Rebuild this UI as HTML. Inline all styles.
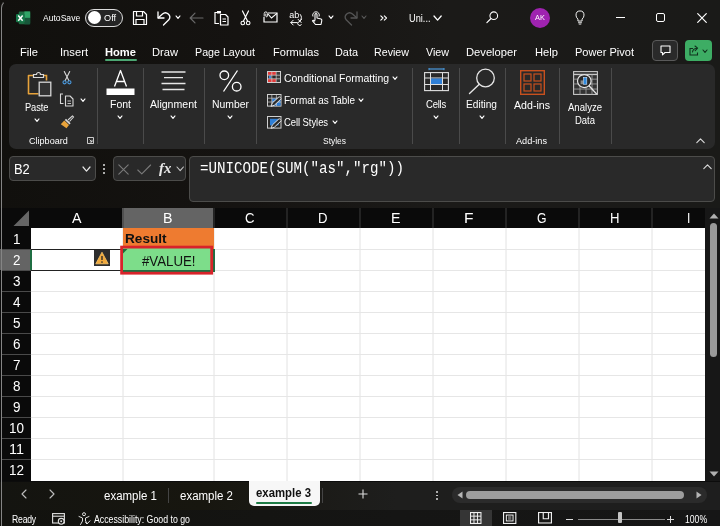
<!DOCTYPE html>
<html lang="en"><head><meta charset="utf-8"><title>Excel - UNICODE example</title>
<style>
html,body{margin:0;padding:0;}
body{width:720px;height:526px;overflow:hidden;background:linear-gradient(90deg,#11100d 0%,#151311 33%,#1b1a18 62%,#1a1a18 100%);position:relative;font-family:'Liberation Sans', sans-serif;}
#app{position:absolute;left:0;top:0;width:720px;height:526px;overflow:hidden;will-change:transform;}
#app div{position:absolute;box-sizing:border-box;}
#app svg{position:absolute;overflow:visible;}
.t{position:absolute;white-space:pre;transform-origin:0 50%;}
</style></head><body><div id="app">
<div style="left:1.4px;top:0;width:30px;height:540px;border-left:1.2px solid #858585;border-top:1.2px solid transparent;border-top-left-radius:8px;z-index:5;pointer-events:none"></div>
<svg style="left:15.9px;top:10.6px" width="14.2" height="13.8" viewBox="0 0 16 16" preserveAspectRatio="none" fill="none"><rect x="3" y="0.5" width="13" height="15" rx="1.5" fill="#1d6b41"/>
<rect x="9.5" y="0.5" width="6.5" height="7.5" fill="#2fa567"/><rect x="9.5" y="8" width="6.5" height="7.5" fill="#17573a"/>
<rect x="0" y="3.5" width="10" height="9.5" rx="1.2" fill="#16794a"/>
<path d="M2.5 5.3 L7.5 11.2 M7.5 5.3 L2.5 11.2" stroke="#fff" stroke-width="1.7"/></svg>
<div style="left:85.3px;top:8.8px;width:37.8px;height:17.8px;border:1px solid #dcdcdc;border-radius:9px;background:#242424"></div>
<div style="left:88.1px;top:11.3px;width:12.6px;height:12.6px;border-radius:7px;background:#fff"></div>
<svg style="left:132px;top:10px" width="16" height="16" viewBox="0 0 16 16" preserveAspectRatio="none" fill="none"><path d="M1.5 1.5 h10 l3 3 v10 h-13 z" stroke="#fff" stroke-width="1.2" stroke-linejoin="round"/>
<path d="M4.5 1.5 v4.5 h6 v-4.5 M4 14.5 v-5 h8 v5" stroke="#fff" stroke-width="1.2"/></svg>
<svg style="left:156px;top:10px" width="16" height="16" viewBox="0 0 16 16" preserveAspectRatio="none" fill="none"><path d="M2 2 v6 h6" stroke="#fff" stroke-width="1.3" stroke-linecap="round" stroke-linejoin="round"/>
<path d="M2.3 7.7 L6.5 4 a4.3 4.3 0 0 1 6.3 5.8 L7.5 15" stroke="#fff" stroke-width="1.3" stroke-linecap="round" stroke-linejoin="round"/></svg>
<svg style="left:175px;top:15.34px" width="6" height="4.32" viewBox="0 0 6 4.32" preserveAspectRatio="none" fill="none"><path d="M1 1 L3 3.32 L5 1" stroke="#fff" stroke-width="1.15" stroke-linecap="round" stroke-linejoin="round"/></svg>
<svg style="left:189px;top:12px" width="15" height="12" viewBox="0 0 15 12" preserveAspectRatio="none" fill="none"><path d="M14 6 H1.5 M6 1.2 L1.2 6 L6 10.8" stroke="#6a6a6a" stroke-width="1.2" stroke-linecap="round" stroke-linejoin="round"/></svg>
<svg style="left:214px;top:10px" width="15" height="16" viewBox="0 0 15 16" preserveAspectRatio="none" fill="none"><path d="M4 2.5 h-3 v11 h4" stroke="#fff" stroke-width="1.2"/><path d="M3 1 h4 v2.5 h-4z" fill="#fff"/>
<path d="M6.5 4.5 h5 l2.5 2.5 v8 h-7.5z" stroke="#fff" stroke-width="1.2" stroke-linejoin="round" fill="#141210"/>
<path d="M8.5 9 h3.5 M8.5 11.5 h3.5" stroke="#fff" stroke-width="1"/></svg>
<svg style="left:240px;top:10px" width="11" height="16" viewBox="0 0 11 16" preserveAspectRatio="none" fill="none"><path d="M2.5 1 L7.5 11 M8.5 1 L3.5 11" stroke="#fff" stroke-width="1.2" stroke-linecap="round"/>
<circle cx="2.8" cy="13" r="1.8" stroke="#fff" stroke-width="1.1"/><circle cx="8.2" cy="13" r="1.8" stroke="#fff" stroke-width="1.1"/></svg>
<svg style="left:263px;top:11px" width="15" height="12" viewBox="0 0 15 12" preserveAspectRatio="none" fill="none"><path d="M5 2 H14 V11 H1 V6" stroke="#fff" stroke-width="1.2"/><path d="M5 3 L8.5 7 L14 2.3" stroke="#fff" stroke-width="1.1"/>
<path d="M1.2 5.5 V2.5 a1.6 1.6 0 0 1 3.2 0 V5 a0.8 0.8 0 0 1 -1.6 0 V2.6" stroke="#fff" stroke-width="0.9"/></svg>
<svg style="left:289px;top:11px" width="14" height="15" viewBox="0 0 14 15" preserveAspectRatio="none" fill="none"><text x="0.2" y="7" font-family="Liberation Sans, sans-serif" font-size="9" fill="#fff" textLength="10" lengthAdjust="spacingAndGlyphs">ab</text>
<path d="M11.3 3.5 q2.6 3.2 -0.3 6.4 M12.6 8.2 l-1.8 1.9 l-1.6 -1.7" stroke="#fff" stroke-width="1" stroke-linecap="round" fill="none"/>
<path d="M2 11.6 h6.2 M4.2 9.2 l-2.4 2.4 l2.4 2.4" stroke="#fff" stroke-width="1" stroke-linecap="round" stroke-linejoin="round"/>
<path d="M12.3 11.2 a2 2 0 1 0 0 2.6" stroke="#fff" stroke-width="1" stroke-linecap="round"/></svg>
<svg style="left:311px;top:10px" width="12" height="16" viewBox="0 0 12 16" preserveAspectRatio="none" fill="none"><path d="M2 6.5 a3.3 3.3 0 1 1 6 0" stroke="#fff" stroke-width="1"/>
<path d="M4 10.5 V4.5 a1 1 0 0 1 2 0 V8 l4 1 q1 .4 .8 1.6 L10 14.5 H4.5 L1.5 10.8 q.8 -1.2 2.5 .6" stroke="#fff" stroke-width="1.1" stroke-linejoin="round"/></svg>
<svg style="left:328.3px;top:15.44px" width="6" height="4.32" viewBox="0 0 6 4.32" preserveAspectRatio="none" fill="none"><path d="M1 1 L3 3.32 L5 1" stroke="#fff" stroke-width="1.15" stroke-linecap="round" stroke-linejoin="round"/></svg>
<svg style="left:343px;top:10px" width="16" height="16" viewBox="0 0 16 16" preserveAspectRatio="none" fill="none"><path d="M14 2 v6 h-6" stroke="#555" stroke-width="1.3" stroke-linecap="round" stroke-linejoin="round"/>
<path d="M13.7 7.7 L9.5 4 a4.3 4.3 0 0 0 -6.3 5.8 L8.5 15" stroke="#555" stroke-width="1.3" stroke-linecap="round" stroke-linejoin="round"/></svg>
<svg style="left:361.4px;top:15.44px" width="6" height="4.32" viewBox="0 0 6 4.32" preserveAspectRatio="none" fill="none"><path d="M1 1 L3 3.32 L5 1" stroke="#5a5a5a" stroke-width="1.1" stroke-linecap="round" stroke-linejoin="round"/></svg>
<svg style="left:380px;top:15px" width="8" height="6" viewBox="0 0 8 6" preserveAspectRatio="none" fill="none"><path d="M0.8 0.8 L3 3 L0.8 5.2 M4.3 0.8 L6.5 3 L4.3 5.2" stroke="#fff" stroke-width="1.1" stroke-linecap="round" stroke-linejoin="round"/></svg>
<svg style="left:433.4px;top:14.91px" width="9.2" height="6.18" viewBox="0 0 9.2 6.18" preserveAspectRatio="none" fill="none"><path d="M1 1 L4.6 5.18 L8.2 1" stroke="#fff" stroke-width="1.3" stroke-linecap="round" stroke-linejoin="round"/></svg>
<svg style="left:485.5px;top:11px" width="12.5" height="12.5" viewBox="0 0 14 14" preserveAspectRatio="none" fill="none"><circle cx="8.7" cy="5.3" r="4.3" stroke="#fff" stroke-width="1.2"/><path d="M5.6 8.4 L1 13" stroke="#fff" stroke-width="1.3" stroke-linecap="round"/></svg>
<div style="left:529.7px;top:7.6px;width:20.2px;height:20.2px;border-radius:10.1px;background:#9f23b0"></div>
<svg style="left:574.8px;top:10.3px" width="10" height="14.8" viewBox="0 0 12 17" preserveAspectRatio="none" fill="none"><path d="M3.5 10.5 q-2.3 -2 -2.3 -4.6 a4.8 4.8 0 0 1 9.6 0 q0 2.6 -2.3 4.6 v2.2 h-5z" stroke="#fff" stroke-width="1.1" stroke-linejoin="round"/>
<path d="M3.7 14.6 h4.6 M4.5 16.2 h3" stroke="#fff" stroke-width="1"/></svg>
<div style="left:616px;top:17px;width:9px;height:1.3px;background:#fff;"></div>
<div style="left:656px;top:13px;width:9px;height:9px;border:1.3px solid #fff;border-radius:2px"></div>
<svg style="left:697px;top:13px" width="10" height="10" viewBox="0 0 10 10" preserveAspectRatio="none" fill="none"><path d="M0.7 0.7 L9.3 9.3 M9.3 0.7 L0.7 9.3" stroke="#fff" stroke-width="1.2" stroke-linecap="round"/></svg>
<div style="left:105px;top:59px;width:32px;height:2px;background:#4ca773;border-radius:1px"></div>
<div style="left:652px;top:40px;width:26px;height:21px;border:1px solid #5a5a5a;border-radius:4px;background:#2a2a2a"></div>
<svg style="left:660px;top:45px" width="11" height="11" viewBox="0 0 11 11" preserveAspectRatio="none" fill="none"><path d="M1 1 h9 v6.5 h-5 l-2.5 2.3 v-2.3 h-1.5z" stroke="#fff" stroke-width="1.1" stroke-linejoin="round"/></svg>
<div style="left:685px;top:40px;width:27px;height:21px;border-radius:4px;background:#3dad64"></div>
<svg style="left:689px;top:45px" width="10" height="11" viewBox="0 0 10 11" preserveAspectRatio="none" fill="none"><path d="M4 3.5 h-3 v6.5 h7.5 v-2.5" stroke="#10311d" stroke-width="1.1"/><path d="M3.5 7 q.5 -3.5 4.2 -3.8 M6 1 l2.6 2.2 l-2.4 2.4" stroke="#10311d" stroke-width="1.1" stroke-linecap="round" stroke-linejoin="round"/></svg>
<svg style="left:702px;top:48.84px" width="6" height="4.32" viewBox="0 0 6 4.32" preserveAspectRatio="none" fill="none"><path d="M1 1 L3 3.32 L5 1" stroke="#10311d" stroke-width="1.1" stroke-linecap="round" stroke-linejoin="round"/></svg>
<div style="left:9px;top:64px;width:706.3px;height:84.7px;background:#292929;border-radius:7px"></div>
<div style="left:97px;top:68px;width:1px;height:76px;background:#4a4a4a;"></div>
<div style="left:143px;top:68px;width:1px;height:76px;background:#4a4a4a;"></div>
<div style="left:204px;top:68px;width:1px;height:76px;background:#4a4a4a;"></div>
<div style="left:256px;top:68px;width:1px;height:76px;background:#4a4a4a;"></div>
<div style="left:412px;top:68px;width:1px;height:76px;background:#4a4a4a;"></div>
<div style="left:459px;top:68px;width:1px;height:76px;background:#4a4a4a;"></div>
<div style="left:505px;top:68px;width:1px;height:76px;background:#4a4a4a;"></div>
<div style="left:559px;top:68px;width:1px;height:76px;background:#4a4a4a;"></div>
<div style="left:611px;top:68px;width:1px;height:76px;background:#4a4a4a;"></div>
<svg style="left:27px;top:71px" width="26" height="29" viewBox="0 0 26 29" preserveAspectRatio="none" fill="none"><path d="M9 4.5 h-7.5 v18.3 h10" stroke="#e8a33b" stroke-width="1.6" stroke-linejoin="round"/><path d="M17 4.5 h2.5 v5" stroke="#e8a33b" stroke-width="1.6"/>
<path d="M6.5 6.5 v-3 h3 a2 2 0 0 1 4 0 h3 v3z" stroke="#d8d8d8" stroke-width="1.2" fill="#292929"/>
<rect x="12.2" y="11.2" width="11.6" height="13.6" stroke="#d8d8d8" stroke-width="1.3" fill="#333"/></svg>
<svg style="left:33.5px;top:117.84px" width="6" height="4.32" viewBox="0 0 6 4.32" preserveAspectRatio="none" fill="none"><path d="M1 1 L3 3.32 L5 1" stroke="#fff" stroke-width="1.15" stroke-linecap="round" stroke-linejoin="round"/></svg>
<svg style="left:62px;top:71px" width="10" height="14" viewBox="0 0 10 14" preserveAspectRatio="none" fill="none"><path d="M2.3 0.5 L6.8 9.5 M7.7 0.5 L3.2 9.5" stroke="#d8d8d8" stroke-width="1.1" stroke-linecap="round"/>
<circle cx="2.6" cy="11.3" r="1.6" stroke="#4a9be0" stroke-width="1.1"/><circle cx="7.4" cy="11.3" r="1.6" stroke="#4a9be0" stroke-width="1.1"/></svg>
<svg style="left:59px;top:92.3px" width="15" height="15" viewBox="0 0 15 15" preserveAspectRatio="none" fill="none"><path d="M4 2 h-2.5 v9.5 h3" stroke="#d8d8d8" stroke-width="1.1"/>
<path d="M6.5 4 h4.5 l3 3 v7 h-7.5z" stroke="#d8d8d8" stroke-width="1.1" stroke-linejoin="round" fill="#292929"/><path d="M8.5 9 h3.5 M8.5 11.5 h3.5" stroke="#d8d8d8" stroke-width="0.9"/></svg>
<svg style="left:79.8px;top:98.04px" width="6" height="4.32" viewBox="0 0 6 4.32" preserveAspectRatio="none" fill="none"><path d="M1 1 L3 3.32 L5 1" stroke="#fff" stroke-width="1.15" stroke-linecap="round" stroke-linejoin="round"/></svg>
<svg style="left:60px;top:115px" width="14" height="14" viewBox="0 0 14 14" preserveAspectRatio="none" fill="none"><path d="M8 5 L12.5 0.8 L13.6 2 L9.5 6.5" stroke="#d8d8d8" stroke-width="1.1" stroke-linejoin="round"/>
<path d="M6 3.8 L10.6 8.2 L9.5 9.5 L4.8 5z" fill="#d8d8d8"/>
<path d="M4.3 5.6 L9 10 L6.5 13.3 L0.8 9.2z" fill="#e8a33b"/></svg>
<svg style="left:87px;top:137px" width="7" height="7" viewBox="0 0 7 7" preserveAspectRatio="none" fill="none"><path d="M0.5 0.5 h6 v6 h-6z" stroke="#ddd" stroke-width="0.9"/><path d="M2.5 2.5 L5 5 M5 2.8 V5 H2.8" stroke="#ddd" stroke-width="0.9"/></svg>
<svg style="left:106px;top:69px" width="29" height="28" viewBox="0 0 29 28" preserveAspectRatio="none" fill="none"><path d="M8.5 17.5 L14.5 1.5 L20.5 17.5 M10.5 12.5 h8" stroke="#fff" stroke-width="1.3" stroke-linejoin="round"/>
<rect x="0.5" y="19.5" width="28" height="6.5" fill="#fff"/></svg>
<svg style="left:117px;top:114.84px" width="6" height="4.32" viewBox="0 0 6 4.32" preserveAspectRatio="none" fill="none"><path d="M1 1 L3 3.32 L5 1" stroke="#fff" stroke-width="1.15" stroke-linecap="round" stroke-linejoin="round"/></svg>
<svg style="left:161px;top:71px" width="25" height="20" viewBox="0 0 25 20" preserveAspectRatio="none" fill="none"><path d="M0.5 1 h24 M3 6.7 h19 M0.5 12.5 h24 M1.5 18.5 h22" stroke="#e6e6e6" stroke-width="1.3"/></svg>
<svg style="left:170px;top:114.84px" width="6" height="4.32" viewBox="0 0 6 4.32" preserveAspectRatio="none" fill="none"><path d="M1 1 L3 3.32 L5 1" stroke="#fff" stroke-width="1.15" stroke-linecap="round" stroke-linejoin="round"/></svg>
<svg style="left:219px;top:70px" width="23" height="22" viewBox="0 0 23 22" preserveAspectRatio="none" fill="none"><circle cx="5.3" cy="5.3" r="4.3" stroke="#fff" stroke-width="1.3"/><circle cx="17.7" cy="16.7" r="4.3" stroke="#fff" stroke-width="1.3"/>
<path d="M18.5 0.5 L4.5 21.5" stroke="#fff" stroke-width="1.3"/></svg>
<svg style="left:227px;top:114.84px" width="6" height="4.32" viewBox="0 0 6 4.32" preserveAspectRatio="none" fill="none"><path d="M1 1 L3 3.32 L5 1" stroke="#fff" stroke-width="1.15" stroke-linecap="round" stroke-linejoin="round"/></svg>
<svg style="left:267px;top:71.3px" width="14" height="12" viewBox="0 0 14 12" preserveAspectRatio="none" fill="none"><rect x="0.5" y="0.5" width="13" height="11" stroke="#cfcfcf" stroke-width="1" fill="#3a3a3a"/>
<rect x="1" y="1" width="8" height="3.2" fill="#e23b3b"/><rect x="1" y="7.8" width="8" height="3.2" fill="#e23b3b"/>
<rect x="2" y="4.6" width="2" height="2.8" fill="#3f86e0"/><rect x="5" y="4.4" width="4" height="3.2" fill="#2b2b2b"/>
<path d="M4.8 0.5 v11 M9.2 0.5 v11 M0.5 4.2 h13 M0.5 7.8 h13" stroke="#cfcfcf" stroke-width="0.7"/></svg>
<svg style="left:392px;top:75.84px" width="6" height="4.32" viewBox="0 0 6 4.32" preserveAspectRatio="none" fill="none"><path d="M1 1 L3 3.32 L5 1" stroke="#fff" stroke-width="1.15" stroke-linecap="round" stroke-linejoin="round"/></svg>
<svg style="left:267px;top:94px" width="15" height="13" viewBox="0 0 15 13" preserveAspectRatio="none" fill="none"><rect x="0.5" y="0.5" width="13.5" height="11.6" stroke="#cfcfcf" stroke-width="1"/>
<rect x="5" y="4.4" width="8.6" height="7.3" fill="#2f7fd6"/>
<path d="M4.8 0.5 v11.6 M9.4 0.5 v11.6 M0.5 4.2 h13.5 M0.5 8 h13.5" stroke="#cfcfcf" stroke-width="0.7"/>
<path d="M4 12.3 L5.3 9 L12.2 2.6 L14.3 4.7 L7.4 11.2z" fill="#2b2b2b" stroke="#efefef" stroke-width="0.9" stroke-linejoin="round"/></svg>
<svg style="left:357.8px;top:97.84px" width="6" height="4.32" viewBox="0 0 6 4.32" preserveAspectRatio="none" fill="none"><path d="M1 1 L3 3.32 L5 1" stroke="#fff" stroke-width="1.15" stroke-linecap="round" stroke-linejoin="round"/></svg>
<svg style="left:267px;top:116px" width="15" height="13" viewBox="0 0 15 13" preserveAspectRatio="none" fill="none"><rect x="0.5" y="0.5" width="13.5" height="11.6" stroke="#cfcfcf" stroke-width="1"/>
<rect x="3" y="2.8" width="8.6" height="6.6" fill="#2f7fd6"/>
<path d="M4 12.3 L5.3 9 L12.2 2.6 L14.3 4.7 L7.4 11.2z" fill="#2b2b2b" stroke="#efefef" stroke-width="0.9" stroke-linejoin="round"/></svg>
<svg style="left:331.5px;top:119.84px" width="6" height="4.32" viewBox="0 0 6 4.32" preserveAspectRatio="none" fill="none"><path d="M1 1 L3 3.32 L5 1" stroke="#fff" stroke-width="1.15" stroke-linecap="round" stroke-linejoin="round"/></svg>
<svg style="left:424px;top:68px" width="25" height="24" viewBox="0 0 25 24" preserveAspectRatio="none" fill="none"><path d="M5 1 h15" stroke="#4a9be0" stroke-width="1.2"/><path d="M5 0 v2.2 M20 0 v2.2" stroke="#4a9be0" stroke-width="1"/>
<rect x="0.6" y="4.6" width="23.8" height="18" stroke="#e0e0e0" stroke-width="1.1"/>
<path d="M0.6 10 h23.8 M0.6 16.5 h23.8 M6.5 4.6 v18 M18.5 4.6 v18" stroke="#e0e0e0" stroke-width="1"/>
<rect x="7" y="10.5" width="11" height="5.5" fill="#2f7fd6"/></svg>
<svg style="left:432.5px;top:114.84px" width="6" height="4.32" viewBox="0 0 6 4.32" preserveAspectRatio="none" fill="none"><path d="M1 1 L3 3.32 L5 1" stroke="#fff" stroke-width="1.15" stroke-linecap="round" stroke-linejoin="round"/></svg>
<svg style="left:468px;top:68px" width="28" height="27" viewBox="0 0 28 27" preserveAspectRatio="none" fill="none"><circle cx="17.5" cy="10" r="8.8" stroke="#e6e6e6" stroke-width="1.3"/><path d="M11.3 16.3 L1.5 25.5" stroke="#e6e6e6" stroke-width="1.4" stroke-linecap="round"/></svg>
<svg style="left:478.5px;top:114.84px" width="6" height="4.32" viewBox="0 0 6 4.32" preserveAspectRatio="none" fill="none"><path d="M1 1 L3 3.32 L5 1" stroke="#fff" stroke-width="1.15" stroke-linecap="round" stroke-linejoin="round"/></svg>
<svg style="left:520px;top:70px" width="25" height="25" viewBox="0 0 25 25" preserveAspectRatio="none" fill="none"><rect x="0.7" y="0.7" width="23.6" height="23.6" stroke="#c8501e" stroke-width="1.4"/>
<rect x="4" y="4" width="7" height="7" stroke="#c8501e" stroke-width="1.2"/><rect x="14" y="4" width="7" height="7" stroke="#c8501e" stroke-width="1.2"/>
<rect x="4" y="14" width="7" height="7" stroke="#c8501e" stroke-width="1.2"/><rect x="14" y="14" width="7" height="7" stroke="#c8501e" stroke-width="1.2"/></svg>
<svg style="left:573px;top:71px" width="25" height="24" viewBox="0 0 25 25" preserveAspectRatio="none" fill="none"><rect x="0.6" y="0.6" width="23.8" height="23.8" stroke="#c8c8c8" stroke-width="1.1" fill="#333"/>
<path d="M0.6 3.6 h23.8" stroke="#c8c8c8" stroke-width="1.4"/>
<path d="M0.6 8.5 h23.8 M0.6 13.5 h23.8 M0.6 18.8 h23.8 M7 3.6 v21 M13 3.6 v21 M19 3.6 v21" stroke="#a8a8a8" stroke-width="0.8"/>
<circle cx="11.3" cy="10.5" r="6.8" fill="#292929" stroke="#e6e6e6" stroke-width="1.2"/>
<path d="M16.2 15.6 L23.3 23.6" stroke="#e6e6e6" stroke-width="1.4" stroke-linecap="round"/>
<rect x="7.6" y="9.8" width="2.6" height="4" fill="#8a8a8a"/><rect x="10.6" y="6.6" width="3.2" height="7.2" fill="#2f8be0" stroke="#cfe6ff" stroke-width="0.6"/></svg>
<svg style="left:696.3px;top:138px" width="9" height="5.5" viewBox="0 0 9 5.5" preserveAspectRatio="none" fill="none"><path d="M0.8 4.7 L4.5 0.9 L8.2 4.7" stroke="#dcdcdc" stroke-width="1.1" stroke-linecap="round" stroke-linejoin="round"/></svg>
<div style="left:9px;top:156px;width:87px;height:25px;background:#292929;border:1px solid #4c4c4a;border-radius:4px"></div>
<svg style="left:82.0px;top:166.27px" width="9.0" height="6.06" viewBox="0 0 9.0 6.06" preserveAspectRatio="none" fill="none"><path d="M1 1 L4.5 5.06 L8.0 1" stroke="#e6e6e6" stroke-width="1.2" stroke-linecap="round" stroke-linejoin="round"/></svg>
<div style="left:103.2px;top:163.5px;width:2px;height:2px;background:#e0e0e0;border-radius:1px"></div>
<div style="left:103.2px;top:167.5px;width:2px;height:2px;background:#e0e0e0;border-radius:1px"></div>
<div style="left:103.2px;top:171.5px;width:2px;height:2px;background:#e0e0e0;border-radius:1px"></div>
<div style="left:113px;top:156px;width:73px;height:25px;background:#292929;border:1px solid #4c4c4a;border-radius:4px"></div>
<svg style="left:118px;top:164px" width="11" height="11" viewBox="0 0 11 11" preserveAspectRatio="none" fill="none"><path d="M0.8 0.8 L10.2 10.2 M10.2 0.8 L0.8 10.2" stroke="#7a7a7a" stroke-width="1.1" stroke-linecap="round"/></svg>
<svg style="left:137px;top:164px" width="14.5" height="11" viewBox="0 0 14.5 11" preserveAspectRatio="none" fill="none"><path d="M0.8 6 L4.8 9.8 L13.6 1" stroke="#7a7a7a" stroke-width="1.1" stroke-linecap="round" stroke-linejoin="round"/></svg>
<svg style="left:175.8px;top:165.94px" width="8.4" height="5.71" viewBox="0 0 8.4 5.71" preserveAspectRatio="none" fill="none"><path d="M1 1 L4.2 4.71 L7.4 1" stroke="#c8c8c8" stroke-width="1.1" stroke-linecap="round" stroke-linejoin="round"/></svg>
<div style="left:189px;top:156px;width:526px;height:46px;background:#292929;border:1px solid #4c4c4a;border-radius:4px"></div>
<svg style="left:702.8px;top:164.3px" width="9" height="5.5" viewBox="0 0 9 5.5" preserveAspectRatio="none" fill="none"><path d="M0.8 4.7 L4.5 0.9 L8.2 4.7" stroke="#dcdcdc" stroke-width="1.1" stroke-linecap="round" stroke-linejoin="round"/></svg>
<div style="left:0px;top:208px;width:705px;height:20px;background:#0a0a0a;"></div>
<div style="left:0px;top:228px;width:31px;height:253px;background:#0a0a0a;"></div>
<div style="left:31px;top:228px;width:674px;height:253px;background:#fff;"></div>
<svg style="left:13px;top:210px" width="16" height="16" viewBox="0 0 16 16" preserveAspectRatio="none" fill="none"><path d="M16 0.5 V16 H0.5z" fill="#666"/></svg>
<div style="left:122px;top:208px;width:91px;height:20px;background:#646464;"></div>
<svg style="left:0px;top:208px" width="705" height="20" viewBox="0 0 705 20" preserveAspectRatio="none" fill="none"><path d="M123 0 V20 M214 0 V20 M287 0 V20 M360 0 V20 M433 0 V20 M506 0 V20 M579 0 V20 M652 0 V20 " stroke="#3c3c3c" stroke-width="1"/></svg>
<div style="left:0px;top:249px;width:31px;height:21px;background:#646464;"></div>
<div style="left:30px;top:249px;width:1.5px;height:21px;background:#1f6e43;"></div>
<div style="left:2px;top:249px;width:29px;height:1px;background:#4a4a4a;"></div>
<div style="left:2px;top:270px;width:29px;height:1px;background:#4a4a4a;"></div>
<div style="left:2px;top:291px;width:29px;height:1px;background:#4a4a4a;"></div>
<div style="left:2px;top:312px;width:29px;height:1px;background:#4a4a4a;"></div>
<div style="left:2px;top:333px;width:29px;height:1px;background:#4a4a4a;"></div>
<div style="left:2px;top:354px;width:29px;height:1px;background:#4a4a4a;"></div>
<div style="left:2px;top:375px;width:29px;height:1px;background:#4a4a4a;"></div>
<div style="left:2px;top:396px;width:29px;height:1px;background:#4a4a4a;"></div>
<div style="left:2px;top:417px;width:29px;height:1px;background:#4a4a4a;"></div>
<div style="left:2px;top:438px;width:29px;height:1px;background:#4a4a4a;"></div>
<div style="left:2px;top:459px;width:29px;height:1px;background:#4a4a4a;"></div>
<svg style="left:31px;top:228px" width="674" height="253" viewBox="0 0 674 253" preserveAspectRatio="none" fill="none"><path d="M92 0 V253 M183 0 V253 M256 0 V253 M329 0 V253 M402 0 V253 M475 0 V253 M548 0 V253 M621 0 V253 " stroke="#e2e2e2" stroke-width="1"/></svg>
<div style="left:31px;top:249px;width:674px;height:1px;background:#e6e6e6;"></div>
<div style="left:31px;top:270px;width:674px;height:1px;background:#e6e6e6;"></div>
<div style="left:31px;top:291px;width:674px;height:1px;background:#e6e6e6;"></div>
<div style="left:31px;top:312px;width:674px;height:1px;background:#e6e6e6;"></div>
<div style="left:31px;top:333px;width:674px;height:1px;background:#e6e6e6;"></div>
<div style="left:31px;top:354px;width:674px;height:1px;background:#e6e6e6;"></div>
<div style="left:31px;top:375px;width:674px;height:1px;background:#e6e6e6;"></div>
<div style="left:31px;top:396px;width:674px;height:1px;background:#e6e6e6;"></div>
<div style="left:31px;top:417px;width:674px;height:1px;background:#e6e6e6;"></div>
<div style="left:31px;top:438px;width:674px;height:1px;background:#e6e6e6;"></div>
<div style="left:31px;top:459px;width:674px;height:1px;background:#e6e6e6;"></div>
<div style="left:31px;top:249px;width:92px;height:1px;background:#222;"></div>
<div style="left:31px;top:270px;width:92px;height:1px;background:#222;"></div>
<div style="left:123px;top:228px;width:91px;height:21px;background:#ee7b30;"></div>
<div style="left:123px;top:248px;width:90px;height:22.2px;background:#7ddd8a;"></div>
<div style="left:123px;top:270.2px;width:90px;height:1.4px;background:#1f6e43;"></div>
<div style="left:213.4px;top:249px;width:1.3px;height:22px;background:#1f6e43;"></div>
<div style="left:212.6px;top:269.2px;width:2.6px;height:2.6px;background:#1f6e43;"></div>
<svg style="left:120px;top:245px" width="95" height="31" viewBox="0 0 95 31" preserveAspectRatio="none" fill="none"><rect x="1.6" y="2.1" width="90.1" height="26.1" stroke="#d8232a" stroke-width="2.8"/></svg>
<svg style="left:123.2px;top:248.7px" width="5" height="5" viewBox="0 0 5 5" preserveAspectRatio="none" fill="none"><path d="M0 0 H4.5 L0 4.5z" fill="#1d6b3a"/></svg>
<div style="left:94px;top:250px;width:16px;height:16px;background:#2e2e2e;"></div>
<svg style="left:95px;top:251px" width="14" height="14" viewBox="0 0 14 14" preserveAspectRatio="none" fill="none"><path d="M7 1.2 L13.2 12.8 H0.8z" fill="#f2a93b" stroke="#f6c46a" stroke-width="0.8" stroke-linejoin="round"/><path d="M7 5 v4" stroke="#2b2b2b" stroke-width="1.4"/><circle cx="7" cy="11" r="0.85" fill="#2b2b2b"/></svg>
<div style="left:705px;top:208px;width:15px;height:273px;background:#171717;"></div>
<svg style="left:709px;top:213px" width="10" height="6" viewBox="0 0 10 6" preserveAspectRatio="none" fill="none"><path d="M5 0.5 L9.5 5.5 H0.5z" fill="#b0b0b0"/></svg>
<div style="left:710.3px;top:222.5px;width:6.7px;height:134.5px;background:#9a9a9a;border-radius:3.5px"></div>
<svg style="left:709px;top:471px" width="10" height="6" viewBox="0 0 10 6" preserveAspectRatio="none" fill="none"><path d="M5 5.5 L9.5 0.5 H0.5z" fill="#b0b0b0"/></svg>
<div style="left:0px;top:481px;width:720px;height:29px;background:linear-gradient(90deg,#141410 0%,#17160f 28%,#1e1e1d 55%,#1e1e1e 100%);"></div>
<div style="left:0px;top:481px;width:720px;height:1px;background:#0c0c0c;"></div>
<svg style="left:21px;top:489px" width="6" height="10" viewBox="0 0 6 10" preserveAspectRatio="none" fill="none"><path d="M5 1 L1 5 L5 9" stroke="#bdbdbd" stroke-width="1.1" stroke-linecap="round" stroke-linejoin="round"/></svg>
<svg style="left:49px;top:489px" width="6" height="10" viewBox="0 0 6 10" preserveAspectRatio="none" fill="none"><path d="M1 1 L5 5 L1 9" stroke="#bdbdbd" stroke-width="1.1" stroke-linecap="round" stroke-linejoin="round"/></svg>
<div style="left:168px;top:488px;width:1px;height:15px;background:#444;"></div>
<div style="left:248.7px;top:481px;width:71.2px;height:24.5px;background:#f7f7f7;border-radius:0 0 5px 5px"></div>
<div style="left:256px;top:502px;width:56px;height:2px;background:#1e7c45;border-radius:1px"></div>
<div style="left:322px;top:488px;width:1px;height:15px;background:#444;"></div>
<svg style="left:358px;top:489px" width="10" height="10" viewBox="0 0 10 10" preserveAspectRatio="none" fill="none"><path d="M5 0.5 V9.5 M0.5 5 H9.5" stroke="#ddd" stroke-width="1.1"/></svg>
<div style="left:436px;top:491px;width:1.8px;height:1.8px;background:#ddd;border-radius:1px"></div>
<div style="left:436px;top:494.5px;width:1.8px;height:1.8px;background:#ddd;border-radius:1px"></div>
<div style="left:436px;top:498px;width:1.8px;height:1.8px;background:#ddd;border-radius:1px"></div>
<div style="left:451.5px;top:486.5px;width:255px;height:16.5px;background:#2b2b2b;border-radius:8.5px"></div>
<svg style="left:457px;top:491px" width="6" height="8" viewBox="0 0 6 8" preserveAspectRatio="none" fill="none"><path d="M0.5 4 L5.5 0.5 V7.5z" fill="#b5b5b5"/></svg>
<svg style="left:696px;top:491px" width="6" height="8" viewBox="0 0 6 8" preserveAspectRatio="none" fill="none"><path d="M5.5 4 L0.5 0.5 V7.5z" fill="#b5b5b5"/></svg>
<div style="left:466px;top:491px;width:218px;height:7.5px;background:#9e9e9e;border-radius:4px"></div>
<div style="left:0px;top:510px;width:720px;height:16px;background:linear-gradient(90deg,#12120e 0%,#151514 55%,#161616 100%);"></div>
<svg style="left:52px;top:513px" width="13" height="12" viewBox="0 0 13 12" preserveAspectRatio="none" fill="none"><rect x="0.6" y="0.6" width="11.8" height="9.4" stroke="#e0e0e0" stroke-width="1.1"/><path d="M0.6 3.2 h11.8" stroke="#e0e0e0" stroke-width="1.1"/><circle cx="9.2" cy="8.3" r="2.9" fill="#12120e" stroke="#e0e0e0" stroke-width="1.1"/><circle cx="9.2" cy="8.3" r="1" fill="#e0e0e0"/></svg>
<svg style="left:78px;top:512px" width="13" height="13" viewBox="0 0 13 13" preserveAspectRatio="none" fill="none"><circle cx="6" cy="2.2" r="1.5" stroke="#ddd" stroke-width="1"/><path d="M1 4.5 L4.5 6 V9 L2.5 12.5 M11 4.5 L7.5 6 V9 L9 11" stroke="#ddd" stroke-width="1" stroke-linecap="round" stroke-linejoin="round"/><path d="M7.5 10.5 l1.5 1.5 l3 -3.2" stroke="#ddd" stroke-width="1" stroke-linecap="round"/></svg>
<div style="left:460px;top:510px;width:32px;height:16px;background:#353535;"></div>
<svg style="left:469.5px;top:512px" width="11.5" height="12" viewBox="0 0 11 11" preserveAspectRatio="none" fill="none"><rect x="0.5" y="0.5" width="10" height="10" stroke="#eee" stroke-width="1"/><path d="M3.8 0.5 v10 M7.2 0.5 v10 M0.5 3.8 h10 M0.5 7.2 h10" stroke="#eee" stroke-width="0.9"/></svg>
<svg style="left:503.3px;top:512px" width="13.4" height="12" viewBox="0 0 12 11" preserveAspectRatio="none" fill="none"><rect x="0.5" y="0.5" width="11" height="10" stroke="#eee" stroke-width="1"/><rect x="3" y="2.8" width="6" height="5.4" stroke="#eee" stroke-width="0.9"/><path d="M4.5 4.6 h3 M4.5 6.4 h3" stroke="#eee" stroke-width="0.7"/></svg>
<svg style="left:537.5px;top:512px" width="14" height="11.5" viewBox="0 0 12 11" preserveAspectRatio="none" fill="none"><rect x="0.5" y="0.5" width="11" height="10" stroke="#eee" stroke-width="1"/><path d="M4.5 0.5 v6 h4.5 v-6" stroke="#eee" stroke-width="1"/></svg>
<div style="left:566px;top:518.5px;width:7px;height:1px;background:#ddd;"></div>
<div style="left:578px;top:518.5px;width:87px;height:1px;background:#8a8a8a;"></div>
<div style="left:617.7px;top:512px;width:4.6px;height:11px;background:#c4c4c4;border-radius:1px"></div>
<svg style="left:666.7px;top:515.5px" width="7" height="7" viewBox="0 0 7 7" preserveAspectRatio="none" fill="none"><path d="M3.5 0 V7 M0 3.5 H7" stroke="#ddd" stroke-width="1"/></svg>
<span class="t" style="left:43.1px;top:12.1px;line-height:12px;font-size:9.5px;color:#fff;transform:scaleX(0.9028);">AutoSave</span>
<span class="t" style="left:104.4px;top:12.0px;line-height:12px;font-size:9.5px;color:#fff;transform:scaleX(0.9680);">Off</span>
<span class="t" style="left:408.5px;top:11.5px;line-height:13px;font-size:10px;color:#fff;transform:scaleX(0.9210);">Uni...</span>
<span class="t" style="left:535px;top:12.8px;line-height:10px;font-size:8px;color:#fff;transform:scaleX(0.9183);">AK</span>
<span class="t" style="left:20px;top:45.0px;line-height:14px;font-size:11px;color:#fff;transform:scaleX(1.0150);">File</span>
<span class="t" style="left:60px;top:45.0px;line-height:14px;font-size:11px;color:#fff;transform:scaleX(1.0176);">Insert</span>
<span class="t" style="left:105px;top:45.0px;line-height:14px;font-size:11px;color:#fff;transform:scaleX(1.0143);font-weight:700;">Home</span>
<span class="t" style="left:152px;top:45.0px;line-height:14px;font-size:11px;color:#fff;transform:scaleX(1.0128);">Draw</span>
<span class="t" style="left:195px;top:45.0px;line-height:14px;font-size:11px;color:#fff;transform:scaleX(0.9712);">Page Layout</span>
<span class="t" style="left:273px;top:45.0px;line-height:14px;font-size:11px;color:#fff;transform:scaleX(1.0034);">Formulas</span>
<span class="t" style="left:335px;top:45.0px;line-height:14px;font-size:11px;color:#fff;transform:scaleX(0.9892);">Data</span>
<span class="t" style="left:374px;top:45.0px;line-height:14px;font-size:11px;color:#fff;transform:scaleX(0.9701);">Review</span>
<span class="t" style="left:426px;top:45.0px;line-height:14px;font-size:11px;color:#fff;transform:scaleX(0.9723);">View</span>
<span class="t" style="left:466px;top:45.0px;line-height:14px;font-size:11px;color:#fff;transform:scaleX(1.0171);">Developer</span>
<span class="t" style="left:535px;top:45.0px;line-height:14px;font-size:11px;color:#fff;transform:scaleX(1.0166);">Help</span>
<span class="t" style="left:575px;top:45.0px;line-height:14px;font-size:11px;color:#fff;transform:scaleX(1.0051);">Power Pivot</span>
<span class="t" style="left:25.3px;top:100.0px;line-height:14px;font-size:10.8px;color:#fff;transform:scaleX(0.8600);letter-spacing:-0.127px;">Paste</span>
<span class="t" style="left:28.5px;top:134.5px;line-height:12px;font-size:9.5px;color:#fff;transform:scaleX(0.9540);">Clipboard</span>
<span class="t" style="left:110px;top:97.0px;line-height:14px;font-size:11px;color:#fff;transform:scaleX(0.9539);">Font</span>
<span class="t" style="left:150px;top:97.0px;line-height:14px;font-size:11px;color:#fff;transform:scaleX(0.9607);">Alignment</span>
<span class="t" style="left:212px;top:97.0px;line-height:14px;font-size:11px;color:#fff;transform:scaleX(0.9457);">Number</span>
<span class="t" style="left:284px;top:71.0px;line-height:14px;font-size:11px;color:#fff;transform:scaleX(0.9488);">Conditional Formatting</span>
<span class="t" style="left:284px;top:93.0px;line-height:14px;font-size:11px;color:#fff;transform:scaleX(0.9025);">Format as Table</span>
<span class="t" style="left:284px;top:115.0px;line-height:14px;font-size:11px;color:#fff;transform:scaleX(0.8600);letter-spacing:-0.073px;">Cell Styles</span>
<span class="t" style="left:323px;top:134.5px;line-height:12px;font-size:9.5px;color:#fff;transform:scaleX(0.8889);">Styles</span>
<span class="t" style="left:426px;top:97.0px;line-height:14px;font-size:11px;color:#fff;transform:scaleX(0.8600);letter-spacing:-0.239px;">Cells</span>
<span class="t" style="left:466px;top:97.0px;line-height:14px;font-size:11px;color:#fff;transform:scaleX(0.9215);">Editing</span>
<span class="t" style="left:514px;top:98.0px;line-height:14px;font-size:11px;color:#fff;transform:scaleX(0.9652);">Add-ins</span>
<span class="t" style="left:516px;top:134.5px;line-height:12px;font-size:9.5px;color:#fff;transform:scaleX(0.9622);">Add-ins</span>
<span class="t" style="left:568px;top:99.5px;line-height:14px;font-size:11px;color:#fff;transform:scaleX(0.8687);">Analyze</span>
<span class="t" style="left:575px;top:113.0px;line-height:14px;font-size:11px;color:#fff;transform:scaleX(0.8602);">Data</span>
<span class="t" style="left:14px;top:159.0px;line-height:20px;font-size:15px;color:#fff;transform:scaleX(0.8600);letter-spacing:-0.168px;">B2</span>
<span class="t" style="left:159.3px;top:159.5px;line-height:18px;font-size:14px;color:#e8e8e8;transform:scaleX(1.0624);font-weight:700;font-family:'Liberation Serif', serif;font-style:italic;">fx</span>
<span class="t" style="left:200px;top:159.2px;line-height:21px;font-size:16px;color:#fff;transform:scaleX(0.8853);font-family:'Liberation Mono', monospace;">=UNICODE(SUM(&quot;as&quot;,&quot;rg&quot;))</span>
<span class="t" style="left:72.35px;top:209.3px;line-height:18px;font-size:14px;color:#fff;transform:scaleX(1.0167);">A</span>
<span class="t" style="left:163.35px;top:209.3px;line-height:18px;font-size:14px;color:#fff;transform:scaleX(1.0167);">B</span>
<span class="t" style="left:245.35px;top:209.3px;line-height:18px;font-size:14px;color:#fff;transform:scaleX(0.9383);">C</span>
<span class="t" style="left:318.35px;top:209.3px;line-height:18px;font-size:14px;color:#fff;transform:scaleX(0.9383);">D</span>
<span class="t" style="left:391.35px;top:209.3px;line-height:18px;font-size:14px;color:#fff;transform:scaleX(1.0167);">E</span>
<span class="t" style="left:464.35px;top:209.3px;line-height:18px;font-size:14px;color:#fff;transform:scaleX(1.1095);">F</span>
<span class="t" style="left:537.35px;top:209.3px;line-height:18px;font-size:14px;color:#fff;transform:scaleX(0.8723);">G</span>
<span class="t" style="left:610.35px;top:209.3px;line-height:18px;font-size:14px;color:#fff;transform:scaleX(0.9383);">H</span>
<span class="t" style="left:686.6px;top:209.3px;line-height:18px;font-size:14px;color:#fff;transform:scaleX(0.8600);letter-spacing:-0.402px;">I</span>
<span class="t" style="left:12.55px;top:230.0px;line-height:18px;font-size:14px;color:#fff;transform:scaleX(0.9619);">1</span>
<span class="t" style="left:12.55px;top:251.0px;line-height:18px;font-size:14px;color:#fff;transform:scaleX(0.9619);">2</span>
<span class="t" style="left:12.55px;top:272.0px;line-height:18px;font-size:14px;color:#fff;transform:scaleX(0.9619);">3</span>
<span class="t" style="left:12.55px;top:293.0px;line-height:18px;font-size:14px;color:#fff;transform:scaleX(0.9619);">4</span>
<span class="t" style="left:12.55px;top:314.0px;line-height:18px;font-size:14px;color:#fff;transform:scaleX(0.9619);">5</span>
<span class="t" style="left:12.55px;top:335.0px;line-height:18px;font-size:14px;color:#fff;transform:scaleX(0.9619);">6</span>
<span class="t" style="left:12.55px;top:356.0px;line-height:18px;font-size:14px;color:#fff;transform:scaleX(0.9619);">7</span>
<span class="t" style="left:12.55px;top:377.0px;line-height:18px;font-size:14px;color:#fff;transform:scaleX(0.9619);">8</span>
<span class="t" style="left:12.55px;top:398.0px;line-height:18px;font-size:14px;color:#fff;transform:scaleX(0.9619);">9</span>
<span class="t" style="left:8.8px;top:419.0px;line-height:18px;font-size:14px;color:#fff;transform:scaleX(0.9629);">10</span>
<span class="t" style="left:8.8px;top:440.0px;line-height:18px;font-size:14px;color:#fff;transform:scaleX(1.0311);">11</span>
<span class="t" style="left:8.8px;top:461.0px;line-height:18px;font-size:14px;color:#fff;transform:scaleX(0.9629);">12</span>
<span class="t" style="left:125.4px;top:230.0px;line-height:18px;font-size:13.5px;color:#111;transform:scaleX(1.0081);font-weight:700;">Result</span>
<span class="t" style="left:141.5px;top:251.5px;line-height:18px;font-size:14px;color:#111;transform:scaleX(0.9461);">#VALUE!</span>
<span class="t" style="left:104px;top:488.0px;line-height:16px;font-size:12.5px;color:#fff;transform:scaleX(0.9187);">example 1</span>
<span class="t" style="left:180px;top:488.0px;line-height:16px;font-size:12.5px;color:#fff;transform:scaleX(0.9187);">example 2</span>
<span class="t" style="left:256px;top:485.0px;line-height:16px;font-size:12.5px;color:#111;transform:scaleX(0.9096);font-weight:700;">example 3</span>
<span class="t" style="left:12px;top:512.8px;line-height:13px;font-size:10px;color:#fff;transform:scaleX(0.8600);letter-spacing:-0.200px;">Ready</span>
<span class="t" style="left:94px;top:512.8px;line-height:13px;font-size:10px;color:#fff;transform:scaleX(0.8767);">Accessibility: Good to go</span>
<span class="t" style="left:684.6px;top:512.8px;line-height:13px;font-size:10px;color:#fff;transform:scaleX(0.8640);">100%</span>
</div></body></html>
